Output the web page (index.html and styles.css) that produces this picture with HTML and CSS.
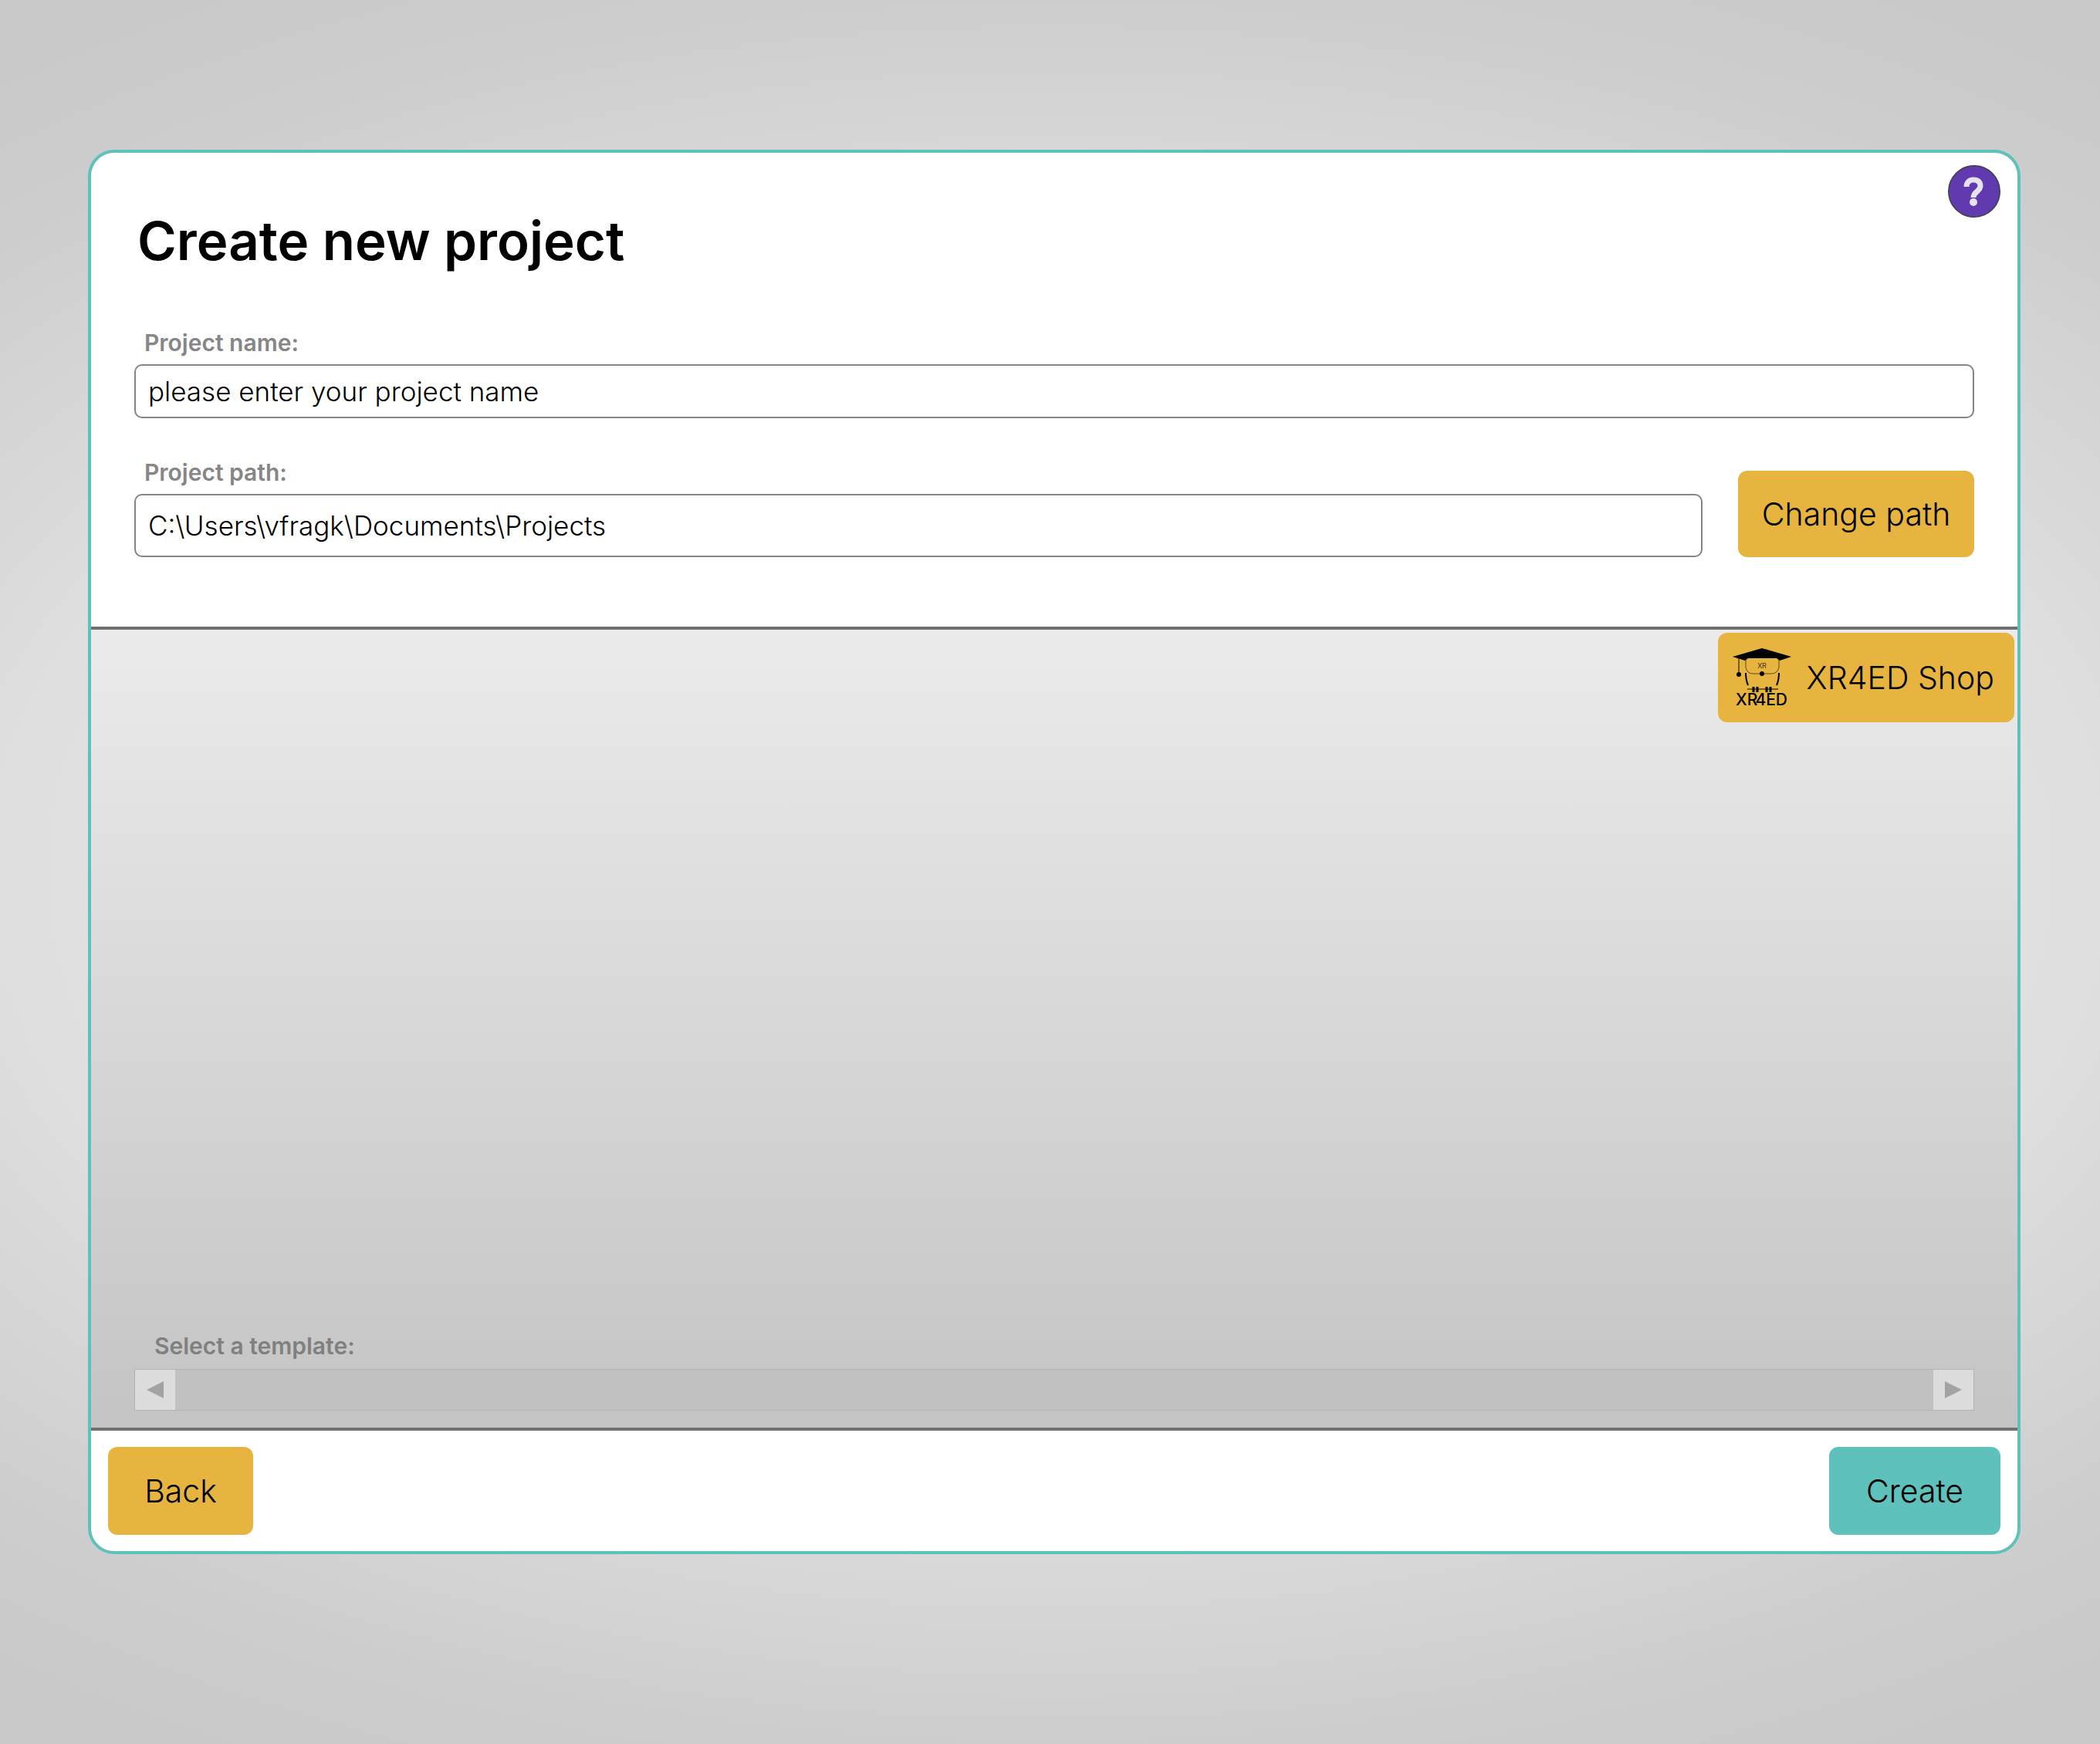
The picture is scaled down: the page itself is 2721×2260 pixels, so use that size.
FILE: index.html
```html
<!DOCTYPE html>
<html lang="en">
<head>
<meta charset="utf-8">
<title>Create new project</title>
<meta name="viewport" content="width=device-width, initial-scale=1">
<link rel="stylesheet" href="styles.css">
</head>
<body class="page">
<main class="card">
  <header class="card-header">
    <h1 class="title">Create new project</h1>
    <button class="help" type="button" aria-label="Help">
      <svg class="help-icon" viewBox="0 0 68 68" aria-hidden="true">
        <circle cx="34" cy="34" r="33" fill="#623ab0" stroke="#4a4158" stroke-width="2"/>
        <path d="M24 28c0-6 4-9 9-9 6 0 9 3 9 8 0 7-9 7-9 15" fill="none" stroke="#e6e2ee" stroke-width="7"/>
        <circle cx="33" cy="48" r="5" fill="#e6e2ee"/>
      </svg>
    </button>
  </header>
  <form class="form">
    <div class="field">
      <label class="label" for="project-name">Project name:</label>
      <input class="input" id="project-name" type="text" value="please enter your project name">
    </div>
    <div class="path-row">
      <div class="field field-grow">
        <label class="label" for="project-path">Project path:</label>
        <input class="input input-tall" id="project-path" type="text" value="C:\Users\vfragk\Documents\Projects">
      </div>
      <button class="button button-path" type="button">Change path</button>
    </div>
  </form>
  <section class="templates" aria-labelledby="templates-label">
    <button class="button button-shop" type="button">
      <svg class="shop-logo" viewBox="0 0 76 76" aria-hidden="true">
        <path d="M0 11 38 0l38 11-15 5-4-3H20l-4 3z"/>
        <g fill="none" stroke="#000">
          <path d="M8 12v20" stroke-width="1"/>
          <path d="M17 14v11q2 8 9 8h24q8 0 10-8V14" stroke-width="1" opacity=".6"/>
          <path d="M17 32q0 9 3 16M60 32q0 9-3 16" stroke-width="2"/>
          <path d="M19 53h40" stroke-width="1"/>
          <path d="M27 50v7M32 50v7M44 50v7M49 50v7" stroke-width="3"/>
        </g>
        <circle cx="8" cy="34" r="3"/>
        <circle cx="38" cy="33" r="3"/>
        <text class="logo-small" x="38" y="26" text-anchor="middle">XR</text>
        <text class="logo-name" x="4" y="74">XR</text>
        <text class="logo-name" x="71" y="74" text-anchor="end">4ED</text>
      </svg>
      XR4ED Shop
    </button>
    <div class="picker">
      <h2 class="label label-template" id="templates-label">Select a template:</h2>
      <div class="scrollbar">
        <button class="scroll-button" type="button" aria-label="Scroll left">
          <svg class="arrow" viewBox="0 0 22 22" aria-hidden="true"><path d="M0 11 22 0v22z"/></svg>
        </button>
        <button class="scroll-button" type="button" aria-label="Scroll right">
          <svg class="arrow" viewBox="0 0 22 22" aria-hidden="true"><path d="M22 11 0 0v22z"/></svg>
        </button>
      </div>
    </div>
  </section>
  <footer class="card-footer">
    <button class="button button-back" type="button">Back</button>
    <button class="button button-create" type="button">Create</button>
  </footer>
</main>
</body>
</html>
```
FILE: styles.css
```css
* {
  box-sizing: border-box;
}

.page {
  display: flex;
  min-height: 100vh;
  margin: 0;
  padding: 194px 103px 246px 114px;
  background: radial-gradient(ellipse 83% 58% at center, #efefef 0%, #dfdfdf 60%, #d9d9d9 68%, #cdcdcd 87%, #c9c9c9 100%);
  color: #000;
  font-family: Inter, "Liberation Sans", sans-serif;
}

.card {
  display: flex;
  flex: 1;
  flex-direction: column;
  overflow: hidden;
  border: 4px solid #5ec1bc;
  border-radius: 34px;
  background: #fff;
}

.card-header {
  display: flex;
  justify-content: space-between;
  padding: 16px 22px 0 60px;
}

.title {
  margin: 58px 0 0;
  font-size: 69px;
  font-weight: 600;
  line-height: 80px;
}

.help {
  width: 68px;
  height: 68px;
  padding: 0;
  border: 0;
  border-radius: 50%;
  background: none;
}

.help-icon {
  display: block;
}

.form {
  display: flex;
  flex-direction: column;
  gap: 52px;
  padding: 74px 56px 90px;
}

.field {
  display: flex;
  flex-direction: column;
  gap: 10px;
}

.field-grow {
  flex: 1;
}

.path-row {
  display: flex;
  align-items: flex-end;
  gap: 46px;
}

.label {
  margin: 0;
  padding-left: 13px;
  color: #868686;
  font-size: 30px;
  font-weight: 600;
  line-height: 36px;
}

.input {
  width: 100%;
  height: 70px;
  padding: 0 16px;
  border: 2px solid #858585;
  border-radius: 10px;
  background: #fff;
  color: #000;
  font-family: inherit;
  font-size: 35px;
  font-weight: 300;
}

.input-tall {
  height: 82px;
}

.button {
  display: flex;
  align-items: center;
  justify-content: center;
  height: 114px;
  padding: 0 20px;
  border: 0;
  border-radius: 12px;
  background: #e7b53f;
  color: #000;
  font-family: inherit;
  font-size: 41px;
  font-weight: 300;
  white-space: nowrap;
}

.button-path {
  width: 306px;
  height: 112px;
}

.templates {
  display: flex;
  flex: 1;
  flex-direction: column;
  align-items: flex-end;
  justify-content: space-between;
  padding: 4px 4px 22px;
  border: solid #707070;
  border-width: 4px 0;
  background: linear-gradient(#ebebeb, #c4c4c4);
}

.button-shop {
  gap: 20px;
  height: 116px;
  padding: 0 26px 0 19px;
}

.shop-logo {
  width: 76px;
  height: 76px;
  overflow: visible;
}

.logo-small {
  font-size: 9px;
}

.logo-name {
  font-size: 21px;
  font-weight: 500;
}

.picker {
  display: flex;
  flex-direction: column;
  gap: 12px;
  align-self: stretch;
  padding: 0 52px;
}

.label-template {
  padding-left: 26px;
  color: #808080;
}

.scrollbar {
  display: flex;
  justify-content: space-between;
  border: 1px solid #b3b3b3;
  background: #c1c1c1;
}

.scroll-button {
  display: flex;
  align-items: center;
  justify-content: center;
  width: 52px;
  height: 52px;
  padding: 0;
  border: 0;
  background: #dcdcdc;
}

.arrow {
  width: 22px;
  height: 22px;
  fill: #a3a3a3;
}

.card-footer {
  display: flex;
  align-items: center;
  justify-content: space-between;
  height: 156px;
  padding: 0 22px;
}

.button-back {
  width: 188px;
}

.button-create {
  width: 222px;
  background: #5ec1bc;
}
```
